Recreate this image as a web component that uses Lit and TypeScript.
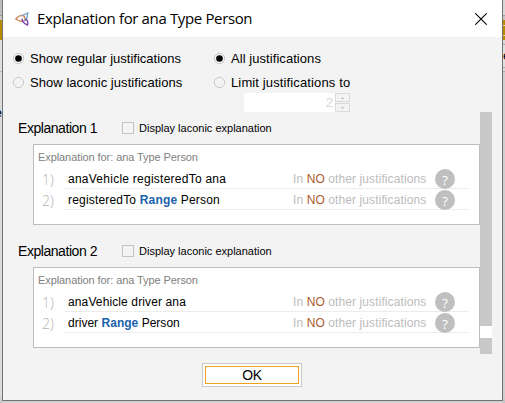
import { LitElement, html, css } from "lit";
import { customElement, property } from "lit/decorators.js";
import { styleMap } from "lit/directives/style-map.js";

interface Axiom {
  before: string;
  keyword?: string;
  after?: string;
  tracking: number;
}

const px = (n: number) => styleMap({ letterSpacing: `${n}px` });

@customElement("radio-option")
class RadioOption extends LitElement {
  @property() label = "";
  @property({ type: Boolean }) checked = false;
  @property({ type: Number }) tracking = 0;

  static styles = css`
    :host { display: flex; align-items: center; height: 24px; }
    svg { width: 13px; height: 13px; flex: none; margin-right: 5px; }
    .label { font-size: 13px; line-height: 16px; padding-top: 2px; white-space: nowrap; }
  `;

  render() {
    return html`
      <svg viewBox="0 0 13 13">
        <circle cx="6.5" cy="6.5" r="6" fill="#fff" />
        <circle cx="6.5" cy="6.5" r="5.2" fill="#f3f3f3" stroke="#bdbdbd" stroke-width="0.9" />
        <circle cx="6.5" cy="6.5" r=${this.checked ? 3.3 : 0} fill="#000" />
      </svg>
      <span class="label" style=${px(this.tracking)}>${this.label}</span>
    `;
  }
}

@customElement("explanation-panel")
class ExplanationPanel extends LitElement {
  @property({ type: Number }) number = 1;
  @property({ attribute: false }) axioms: Axiom[] = [];

  static styles = css`
    :host { display: block; height: 123px; }
    .head { display: flex; align-items: center; height: 32px; }
    .title { width: 104px; margin-left: 15px; font-size: 14px; letter-spacing: -0.45px; white-space: nowrap; }
    .check { box-sizing: border-box; width: 12px; height: 12px; border: 1px solid #c3c3c3; margin-right: 5px; }
    .laconic { font-size: 10px; white-space: nowrap; transform: scaleX(1.1); transform-origin: left; }
    .box { box-sizing: border-box; height: 81px; margin-left: 30px; border: 1px solid #bdbdbd; background: #fff; padding: 5px 10px 0 4px; }
    .caption { height: 18px; line-height: 15px; font-size: 11px; color: #808080; letter-spacing: -0.08px; white-space: nowrap; }
    .row { display: flex; height: 21px; }
    .index { width: 26px; box-sizing: border-box; padding-left: 4px; font: 300 14px/23px "Open Sans", sans-serif; color: #b4b4b4; }
    .line { flex: 1; box-sizing: border-box; display: flex; border-bottom: 1px solid #ececec; padding: 0 14px 0 4px; line-height: 23px; font-size: 12px; white-space: nowrap; }
    .axiom { flex: 1; }
    .keyword { color: #1a62ad; font-weight: bold; }
    .usage { color: #bcbcbc; width: 134px; margin-right: 8px; letter-spacing: 0.1px; }
    .none { color: #ad5a2b; }
    .help { width: 20px; height: 20px; margin-top: 1px; border-radius: 50%; background: #bfbfbf; color: #fff; text-align: center; font: 13px/23px "Open Sans", sans-serif; }
  `;

  render() {
    return html`
      <div class="head">
        <span class="title">Explanation ${this.number}</span>
        <span class="check"></span>
        <span class="laconic">Display laconic explanation</span>
      </div>
      <div class="box">
        <div class="caption">Explanation for: ana Type Person</div>
        ${this.axioms.map(
          (a, i) => html`<div class="row">
            <span class="index">${i + 1})</span>
            <div class="line">
              <span class="axiom" style=${px(a.tracking)}>${a.before}${a.keyword ? html` <span class="keyword">${a.keyword}</span> ${a.after}` : ""}</span>
              <span class="usage">In <span class="none">NO</span> other justifications</span>
              <span class="help">?</span>
            </div>
          </div>`
        )}
      </div>
    `;
  }
}

@customElement("app-root")
class AppRoot extends LitElement {
  static styles = css`
    :host { display: flex; width: 505px; height: 403px; overflow: hidden; background: #d0d0d0; color: #000; font-family: "Liberation Sans", Arial, sans-serif; }
    .edge { width: 2px; height: 403px; flex: none; overflow: hidden; box-sizing: border-box; font-size: 13px; line-height: 14px; }
    .left { padding-top: 106px; direction: rtl; background: linear-gradient(#bdbdbd 0 15px, #9a9a9a 15px 16px, #c8c8c8 16px 20px, #b88a00 20px 40px, #dedede 40px 71px, #b5b5b5 71px 72px, #dadada 72px 396px, #c4c4c4); }
    .right { padding-top: 49px; background: linear-gradient(#d8d8d8 0 15px, #a0a0a0 15px 16px, #c8c8c8 16px 20px, #b88a00 20px 25px, #e3d8b0 25px 26px, #b88a00 26px 35px, #e3d8b0 35px 36px, #b88a00 36px 40px, #d8d8d8 40px 44px, #a8a8a8 44px 45px, #e0e0e0 45px 67px, #aaa 67px 68px, #dadada 68px 71px, #aaa 71px 72px, #cfcfcf 72px 396px, #c4c4c4); }
    .dialog { box-sizing: border-box; width: 501px; height: 401px; border: solid #737373; border-width: 0 1px 1px; background: #f3f3f3; }
    .bar { display: flex; align-items: center; height: 37px; background: #fff; }
    .logo { width: 14px; height: 14px; margin-left: 12px; }
    .name { flex: 1; margin-left: 8px; font: 15px/20px "Open Sans", sans-serif; letter-spacing: -0.36px; margin-top: -1px; white-space: nowrap; }
    .close { width: 12px; height: 12px; margin-right: 15px; }
    .options { display: flex; height: 75px; padding: 9px 0 0 9px; box-sizing: border-box; }
    .first { width: 201px; }
    .spinner { display: flex; width: 106px; height: 19px; margin: -1px 0 0 31px; }
    .value { width: 91px; box-sizing: border-box; padding-right: 2px; background: #fff; color: #d6d6d6; font-size: 13px; line-height: 20px; text-align: right; }
    .arrows { width: 15px; display: grid; grid-template-rows: 9px 9px; gap: 1px; }
    .arrow { box-sizing: border-box; border: 1px solid #dadada; display: flex; align-items: center; justify-content: center; }
    .arrow svg { width: 3px; height: 2px; }
    .scroll { display: flex; height: 242px; }
    .panels { width: 477px; }
    .track { width: 12px; height: 242px; background: #c8c8c8; box-sizing: border-box; padding-top: 214px; }
    .thumb { height: 12px; background: #fff; }
    .ok { box-sizing: border-box; display: block; width: 100px; height: 24px; margin: 9px 0 0 199px; padding: 2px; border: 1px solid #c8c8c8; background: #fff; }
    .face { display: block; box-sizing: border-box; height: 18px; width: 94px; border: 1px solid #eba31e; font: 14px/17px "Liberation Sans", Arial, sans-serif; color: #000; text-align: center; letter-spacing: -0.4px; }
  `;

  render() {
    return html`
      <div class="edge left">e</div>
      <div class="dialog">
        <div class="bar">
          <svg class="logo" viewBox="0 0 14 14" fill="none">
            <path d="M.8 7C3 4.5 6 3 8 3.5C10 4.5 10.5 7 9.5 8.5C7 10 3.5 9 .8 7Z" stroke="#cf8557" stroke-width="1.4" />
            <path d="M6.5 4L12.7 1C12 4 12.8 7 9.5 9" stroke="#6ea3cb" stroke-width="1.3" />
            <path d="M7.5 6.5C6.5 8.5 8.5 11 12.5 13C13.2 10.5 12.5 8 10.5 7" stroke="#8548ab" stroke-width="1.4" />
          </svg>
          <span class="name">Explanation for ana Type Person</span>
          <svg class="close" viewBox="0 0 12 12"><path d="M.3.3L11.7 11.7M11.7.3L.3 11.7" stroke="#000" stroke-width="1.1" /></svg>
        </div>
        <div class="options">
          <div class="first">
            <radio-option label="Show regular justifications" checked></radio-option>
            <radio-option label="Show laconic justifications" tracking="0.05"></radio-option>
          </div>
          <div>
            <radio-option label="All justifications" tracking="0.06" checked></radio-option>
            <radio-option label="Limit justifications to" tracking="0.13"></radio-option>
            <div class="spinner">
              <div class="value">2</div>
              <div class="arrows">
                <div class="arrow"><svg viewBox="0 0 3 2"><path d="M0 2L1.5 0L3 2Z" fill="#bbb" /></svg></div>
                <div class="arrow"><svg viewBox="0 0 3 2"><path d="M0 0L1.5 2L3 0Z" fill="#bbb" /></svg></div>
              </div>
            </div>
          </div>
        </div>
        <div class="scroll">
          <div class="panels">
            <explanation-panel .number=${1} .axioms=${[{ before: "anaVehicle registeredTo ana", tracking: 0.25 }, { before: "registeredTo", keyword: "Range", after: "Person", tracking: 0.18 }]}></explanation-panel>
            <explanation-panel .number=${2} .axioms=${[{ before: "anaVehicle driver ana", tracking: 0.12 }, { before: "driver", keyword: "Range", after: "Person", tracking: 0.02 }]}></explanation-panel>
          </div>
          <div class="track"><div class="thumb"></div></div>
        </div>
        <div class="ok"><span class="face">OK</span></div>
      </div>
      <div class="edge right">e</div>
    `;
  }
}
